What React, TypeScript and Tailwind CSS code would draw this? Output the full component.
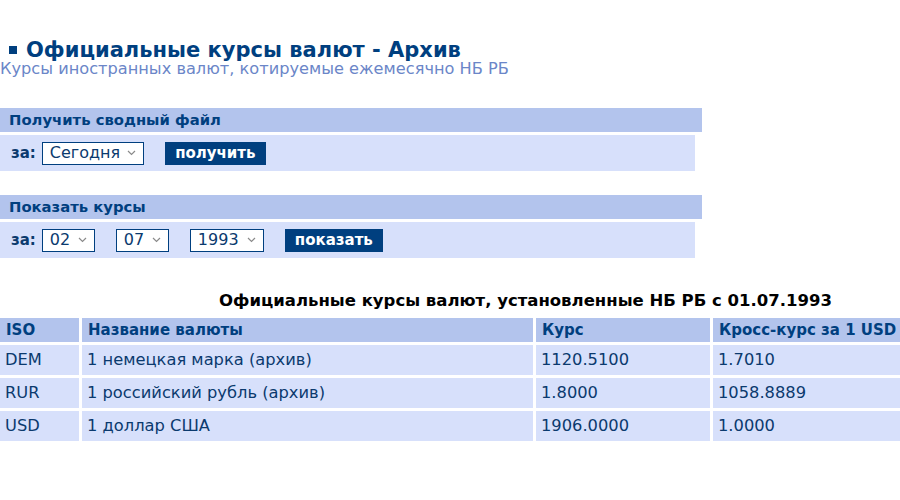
import React from "react";

const Chevron = () => (
  <svg width="9" height="6" viewBox="0 0 9 6" className="shrink-0">
    <path d="M1 1 L4.5 4.5 L8 1" fill="none" stroke="#8a8a8a" strokeWidth="1.2" />
  </svg>
);

const FakeSelect = ({ value, w }: { value: string; w: string }) => (
  <div className={`${w} h-[23px] bg-white border border-[#003f7f] flex items-center justify-between pl-[7px] pr-[7px] text-[16px] text-[#0b3a6e]`}>
    <span className="leading-[16px]">{value}</span>
    <Chevron />
  </div>
);

export default function App() {
  const rows = [
    ["DEM", "1 немецкая марка (архив)", "1120.5100", "1.7010"],
    ["RUR", "1 российский рубль (архив)", "1.8000", "1058.8889"],
    ["USD", "1 доллар США", "1906.0000", "1.0000"],
  ];
  return (
    <div className="w-[900px] h-[500px] bg-white overflow-hidden" style={{ fontFamily: '"DejaVu Sans", Verdana, sans-serif' }}>
      <h1 className="pt-[40px] flex items-center text-[21px] leading-[20px] font-bold text-[#003f7f]">
        <span className="ml-[9px] mr-[9px] w-[8px] h-[8px] bg-[#003f7f] inline-block" />
        Официальные курсы валют - Архив
      </h1>
      <div className="mt-[1px] text-[16.2px] leading-[16px] text-[#6b86c8]">Курсы иностранных валют, котируемые ежемесячно НБ РБ</div>

      <div className="mt-[31px]">
        <div className="w-[702px] h-[24px] bg-[#b3c4ed] pl-[9px] flex items-center text-[14.8px] font-bold text-[#003f7f]">Получить сводный файл</div>
        <div className="mt-[3px] w-[695px] h-[36px] bg-[#d7e0fb] flex items-center pl-[11px]">
          <span className="text-[15px] font-bold text-[#0b3a6e] mr-[6px]">за:</span>
          <FakeSelect value="Сегодня" w="w-[102px]" />
          <div className="ml-[21px] w-[101px] h-[23px] bg-[#003f7f] text-white text-[15px] font-bold flex items-center justify-center">получить</div>
        </div>
      </div>

      <div className="mt-[24px]">
        <div className="w-[702px] h-[24px] bg-[#b3c4ed] pl-[9px] flex items-center text-[14.8px] font-bold text-[#003f7f]">Показать курсы</div>
        <div className="mt-[3px] w-[695px] h-[36px] bg-[#d7e0fb] flex items-center pl-[11px]">
          <span className="text-[15px] font-bold text-[#0b3a6e] mr-[6px]">за:</span>
          <FakeSelect value="02" w="w-[53px]" />
          <div className="ml-[21px]"><FakeSelect value="07" w="w-[53px]" /></div>
          <div className="ml-[21px]"><FakeSelect value="1993" w="w-[74px]" /></div>
          <div className="ml-[21px] w-[98px] h-[23px] bg-[#003f7f] text-white text-[15px] font-bold flex items-center justify-center">показать</div>
        </div>
      </div>

      <div className="mt-[34px] pl-[219px] text-[16.5px] leading-[18px] font-bold text-black whitespace-nowrap">
        Официальные курсы валют, установленные НБ РБ с 01.07.1993
      </div>

      <div className="mt-[8px] grid grid-cols-[79px_451px_174px_187px] gap-[3px]">
        {["ISO", "Название валюты", "Курс", "Кросс-курс за 1 USD"].map((h) => (
          <div key={h} className="h-[24px] bg-[#b3c4ed] pl-[6px] flex items-center text-[15px] font-bold text-[#003f7f] whitespace-nowrap">{h}</div>
        ))}
        {rows.map((r) =>
          r.map((c, i) => (
            <div key={r[0] + i} className="h-[30px] bg-[#d7e0fb] pl-[5px] flex items-center text-[16.3px] text-[#0b3a6e] whitespace-nowrap">{c}</div>
          ))
        )}
      </div>
    </div>
  );
}
